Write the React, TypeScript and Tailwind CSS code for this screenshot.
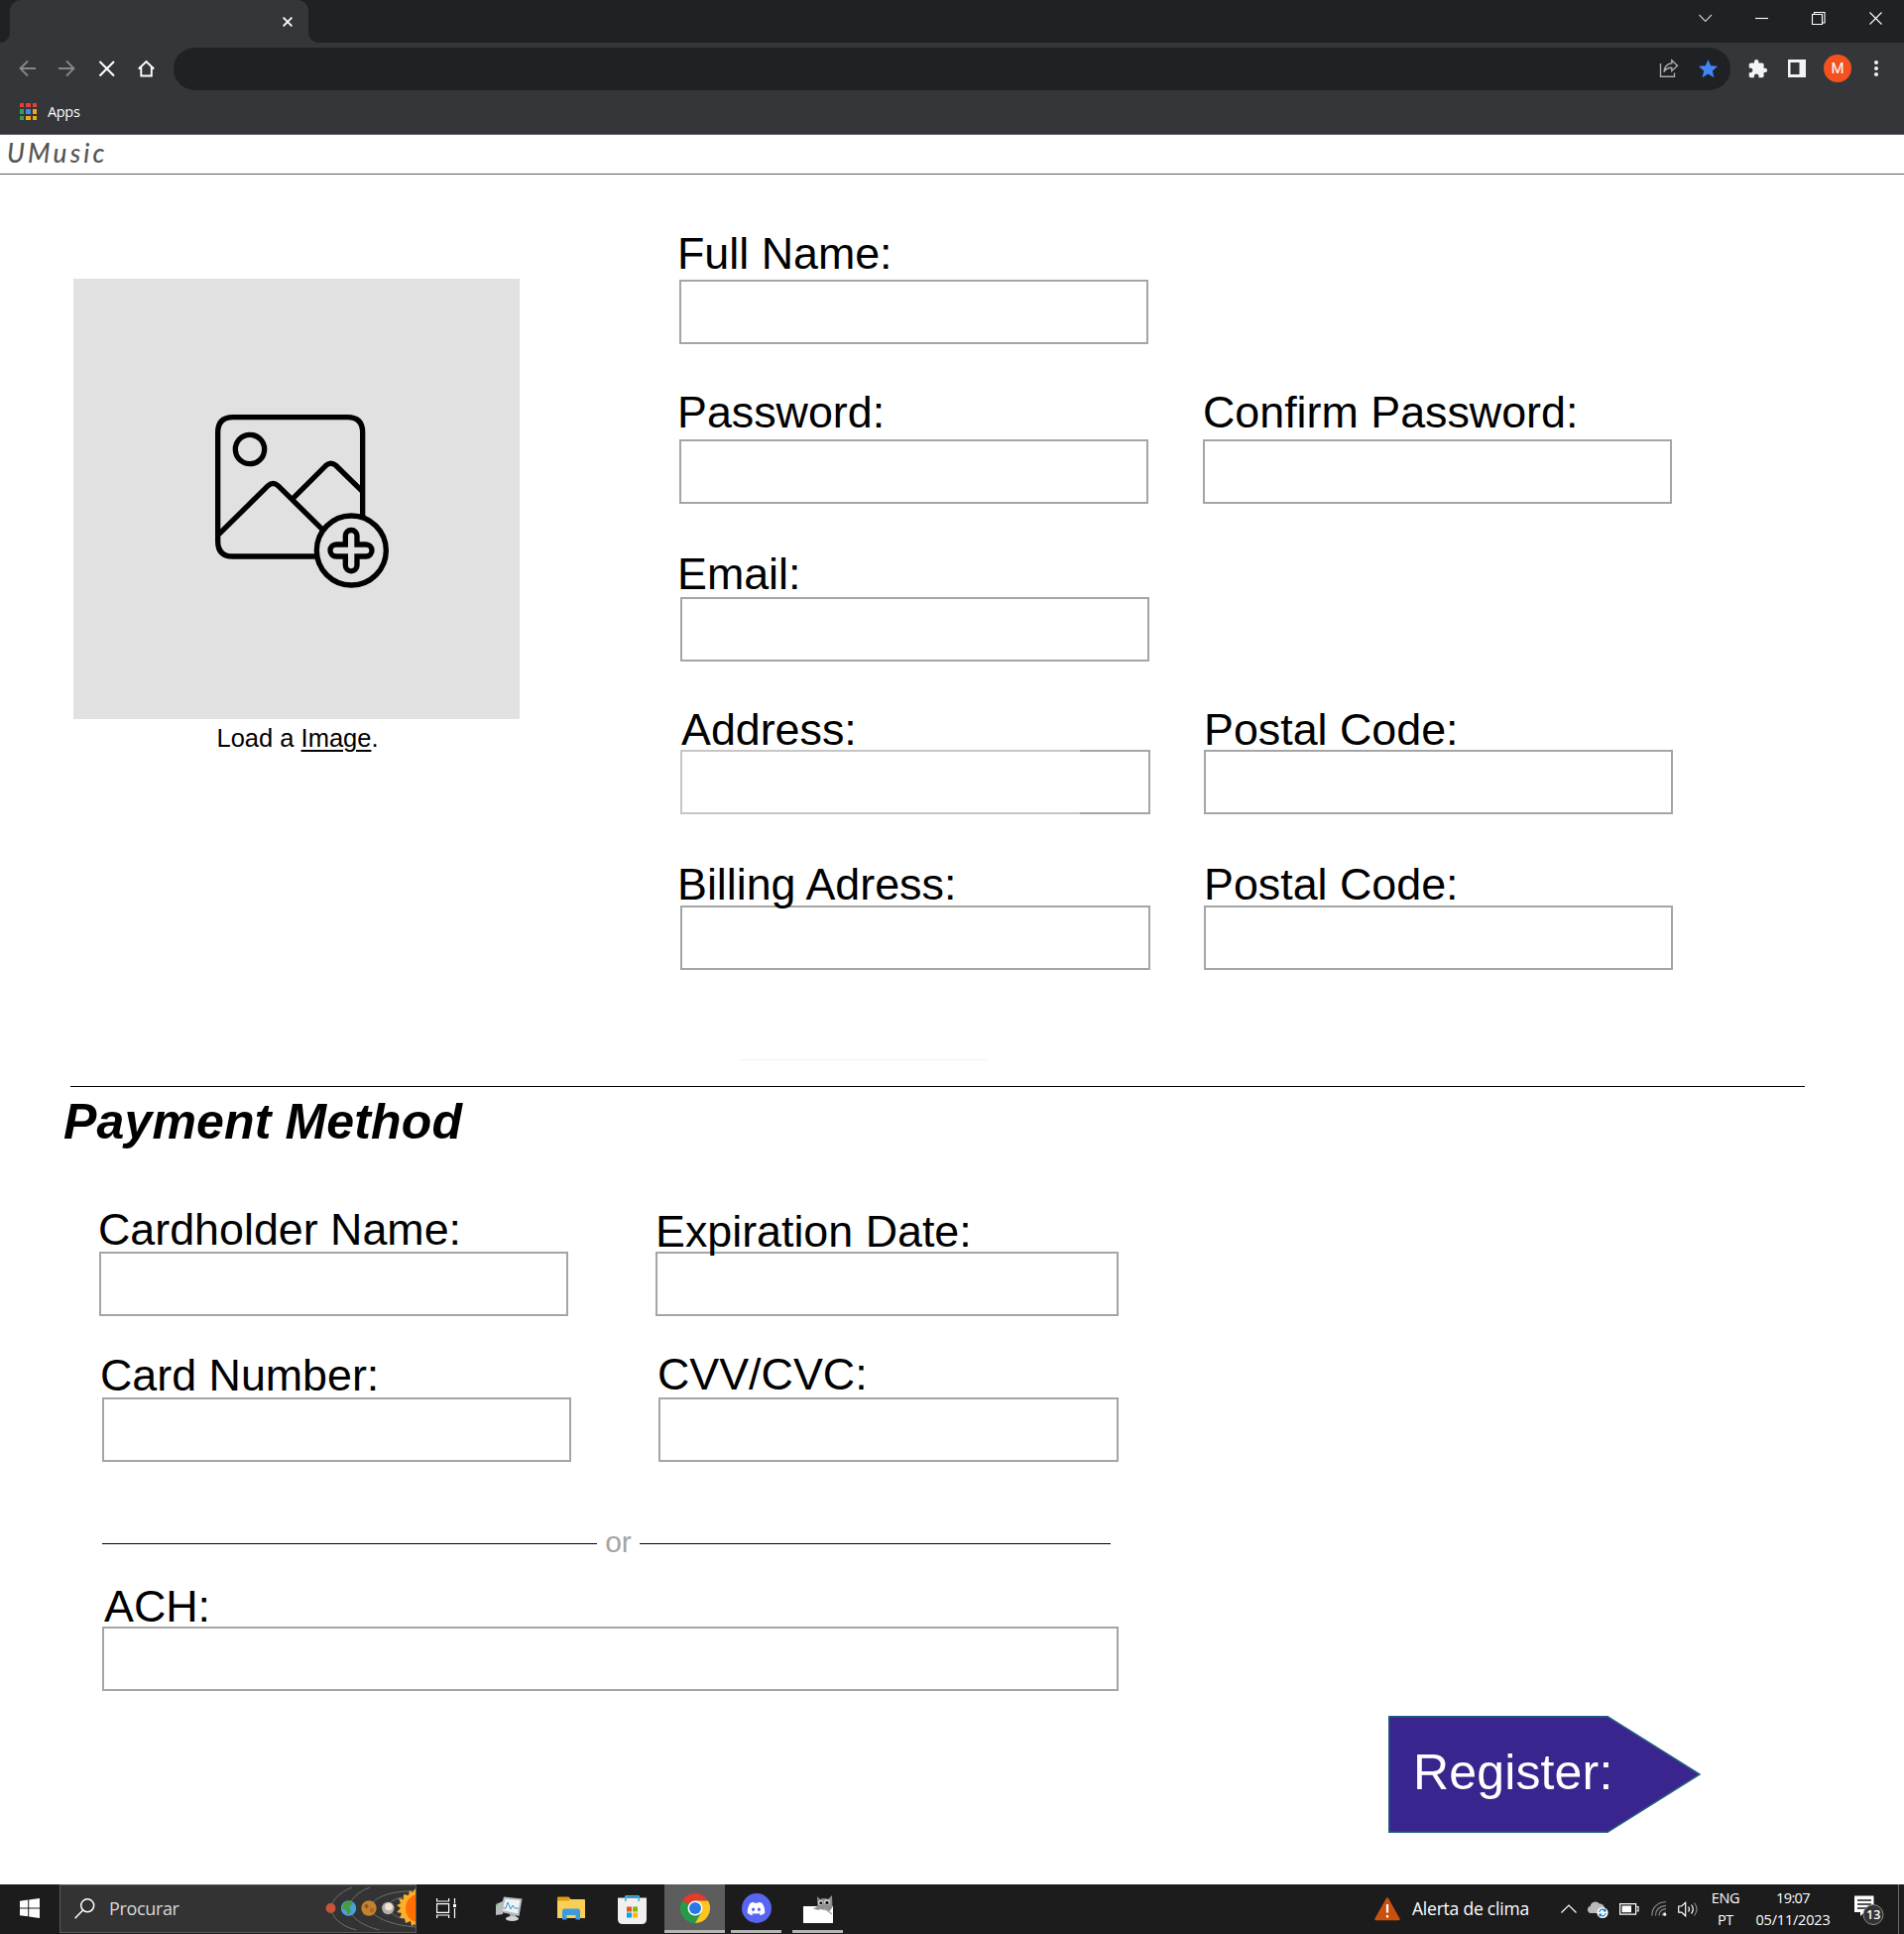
import React from "react";
import { MdExtension, MdStar, MdMoreVert } from "react-icons/md";
import { FaDiscord } from "react-icons/fa";

type FieldProps = { label: string; box: string; labelClass: string; className?: string; children?: React.ReactNode };

function Field({ label, box, labelClass, className = "", children }: FieldProps) {
  return (
    <div className={`flex flex-col ${className}`}>
      <label className={`z-10 h-[38px] whitespace-nowrap text-[44.800px] leading-[45px] ${labelClass}`}>{label}</label>
      <div className={`h-[65px] border-2 border-[#a5a5a5] ${box}`}>{children}</div>
    </div>
  );
}

function TabStrip() {
  return (
    <div className="flex h-[43px] bg-[#202124]">
      <div className="flex h-full w-[10px] items-end bg-[#35363a]">
        <div className="h-full w-full rounded-br-[10px] bg-[#202124]" />
      </div>
      <div className="flex h-full w-[301px] items-center justify-end bg-[#202124]">
        <div className="flex h-full w-full items-center justify-end rounded-t-[11px] bg-[#35363a] pr-[16px]">
          <svg width="10" height="10" viewBox="0 0 10 10" stroke="#fff" strokeWidth="1.8">
            <path d="M.6.6l8.8 8.8M9.4.6L.6 9.4" />
          </svg>
        </div>
      </div>
      <div className="flex h-full flex-1 bg-[#35363a]">
        <div className="flex h-full flex-1 items-start justify-end rounded-bl-[10px] bg-[#202124] pt-[12px] pr-[22px]">
          <svg width="185" height="13" viewBox="0 0 185 13" fill="none" stroke="#fff" strokeWidth="1.1">
            <path d="M.5 3l6.2 6.5L13 3" stroke="#ccc" />
            <path d="M57 6.5h13" />
            <path d="M114.5 2.5h10v10h-10zM116.500 2.500v-2h10.500v10.500h-2.500" />
            <path d="M172.500.5l12 12M184.500.5l-12 12" />
          </svg>
        </div>
      </div>
    </div>
  );
}

function Toolbar() {
  return (
    <div className="flex h-[52px] items-center bg-[#35363a]">
      <svg className="ml-[19px]" width="138" height="18" viewBox="0 0 138 18" fill="none" strokeWidth="1.9">
        <g stroke="#86878a">
          <path d="M17 9H1.500M9 1.500L1.500 9 9 16.500" />
          <path d="M40 9h15.500M48 1.500L55.500 9 48 16.500" />
        </g>
        <g stroke="#fff">
          <path d="M81.500 2l14.500 14.500M96 2L81.500 16.500" strokeWidth="2.100" />
          <path d="M120.800 9.500L128.500 2l7.700 7.500M123.300 8v8.500h10.500V8" />
        </g>
      </svg>
      <div className="ml-[18px] flex h-[43px] w-[1570px] items-center justify-end rounded-full bg-[#202124] pr-[11px]">
        <svg className="mr-[18px]" width="20" height="20" viewBox="0 0 20 20" fill="none" stroke="#a9abae" strokeWidth="1.400">
          <path d="M1.500 5v13.300h14v-3.800" />
          <path d="M12.800 1.800l5.700 5.400-5.700 5.200V9.300C9 9.200 6.500 10.500 5 13.500c.3-4.500 2.800-8 7.800-8.700z" />
        </svg>
        <MdStar className="size-[23px] text-[#4285f4]" />
      </div>
      <MdExtension className="ml-[17px] size-[21px] text-[#f1f3f4]" />
      <svg className="ml-[20px]" width="18" height="18" viewBox="0 0 18 18">
        <path d="M0 0h18v18H0zM2.500 3v12h9V3z" fill="#f1f3f4" fillRule="evenodd" />
      </svg>
      <div className="ml-[18px] flex size-[28px] items-center justify-center rounded-full bg-[#f4511e] font-[Roboto] text-[15px] text-white">M</div>
      <MdMoreVert className="ml-[13px] size-[24px] text-[#f1f3f4]" />
    </div>
  );
}

const dots = ["bg-[#ea3d34]", "bg-[#ea3d34]", "bg-[#ea3d34]", "bg-[#34a04f]", "bg-[#3b8af5]", "bg-[#f5a90b]", "bg-[#34a04f]", "bg-[#f5a90b]", "bg-[#f5a90b]"];

function Bookmarks() {
  return (
    <div className="flex h-[41px] items-center border-b border-[#606165] bg-[#35363a] pb-[5px] pl-[20px]">
      <div className="grid grid-cols-3 gap-[2px]">
        {dots.map((c, i) => (
          <div key={i} className={`size-[4.300px] ${c}`} />
        ))}
      </div>
      <span className="ml-[11px] font-['Open_Sans'] text-[14.500px] leading-[18px] tracking-[-0.300px] text-white">Apps</span>
    </div>
  );
}

function ImageDrop() {
  return (
    <div className="flex h-[444px] w-[450px] bg-[#e1e1e1]">
      <svg width="450" height="444" viewBox="42 33 1350 1332" fill="none" stroke="#000" strokeWidth="16">
        <path d="M778 873H525Q479 873 479 827V498Q479 452 525 452H871Q917 452 917 498V752" />
        <circle cx="576" cy="549" r="44" />
        <path d="M482 806L631 659Q646 646 661 659L794 790M706 698L806 598Q821 585 836 598L916 676" />
        <circle cx="883" cy="855" r="105" />
        <path d="M865 837V811a17 17 0 0 1 35 0V837H927a17 17 0 0 1 0 36H900V900a17 17 0 0 1-35 0V873H837a17 17 0 0 1 0-36z" />
      </svg>
    </div>
  );
}

function RegisterButton() {
  return (
    <button className="relative flex h-[118px] w-[315px] pl-[25px]">
      <svg className="absolute inset-0" width="315" height="118" viewBox="0 0 315 118">
        <path d="M.7.7H221L314 59 221 117.300H.7z" fill="#3a258e" stroke="#23617f" strokeWidth="1.500" />
      </svg>
      <span className="relative pt-[32px] text-[50px] leading-[50px] tracking-[0.150px] text-white">Register:</span>
    </button>
  );
}

function SolarSystem() {
  return (
    <svg width="92" height="48" viewBox="0 0 92 48">
      <g fill="none" stroke="#6a6e74" strokeWidth="1">
        <path d="M28 2C15 7 8 15 6.500 23c2 10 10 18 26 22" />
        <path d="M46 2C35 6 27 13 24.500 22c2 11 15 19 31 23" />
        <path d="M92 6C67 5 49 12 45 23c6 11 25 17 47 19" />
        <path d="M80 12C71 13 65 17 64 22c2 6 9 11 20 12" />
      </g>
      <circle cx="6.500" cy="23" r="5" fill="#c4553a" />
      <circle cx="24.500" cy="23" r="7.700" fill="#4a9fe0" />
      <path d="M19 19q4-5 8-3l2 3-4 2 2 5-3 4-2-5-4-2z" fill="#4a9b3a" />
      <circle cx="45" cy="23" r="7.700" fill="#c4812f" />
      <circle cx="42.500" cy="21" r="2" fill="#8f5718" />
      <circle cx="48" cy="25" r="2.200" fill="#a66a22" />
      <circle cx="64.300" cy="23" r="6.200" fill="#b3aeb0" />
      <circle cx="65" cy="21.500" r="3.800" fill="#f0e4cf" />
      <path d="M92 3l-3 4-3-2-1 5-5-1 0 5-5-1 2 5-4 2 4 3-4 4 5 1-2 5 5 0 1 5 5-2 1 5 3-2 2 4z" fill="#fbae2c" />
      <path d="M92 9Q82 13 82 23t10 14z" fill="#ff6f00" />
    </svg>
  );
}

function Taskbar() {
  return (
    <div className="flex h-[50px] bg-[#1c1c1c] font-['Open_Sans'] text-white">
      <div className="flex w-[60px] items-center justify-center pb-[2px]">
        <svg width="20" height="20" viewBox="0 0 20 20" fill="#fff">
          <path d="M0 2.800L8.200 1.600V9.400H0zM9.200 1.500L20 0V9.400H9.200zM0 10.400H8.200V18.300L0 17.200zM9.200 10.400H20V20L9.200 18.500z" />
        </svg>
      </div>
      <div className="flex h-[49px] w-[360px] items-center justify-between border border-[#595959] bg-[#333333] pl-[14px]">
        <div className="flex items-center">
          <svg width="21" height="21" viewBox="0 0 21 21" fill="none" stroke="#fff" strokeWidth="1.500">
            <circle cx="13.200" cy="7.300" r="6.500" />
            <path d="M8.600 12L.6 20.200" />
          </svg>
          <span className="ml-[14px] text-[18px] tracking-[-0.350px] text-[#d8d8d8]">Procurar</span>
        </div>
        <SolarSystem />
      </div>
      <div className="flex w-[250px] items-center pb-[2px]">
        <svg className="ml-[20px]" width="20" height="20" viewBox="0 0 20 20" fill="none" stroke="#fff" strokeWidth="1.200">
          <path d="M.6 0v3h12V0M.6 20v-3h12v3M.6 5.600h12v8.800H.6zM18.500 0v5.500M18.500 10v10" />
          <path d="M17 6h3v3h-3z" fill="#fff" stroke="none" />
        </svg>
        <svg className="ml-[39px] mt-[2px]" width="28" height="26" viewBox="0 0 28 26">
          <path d="M1 8l7-3v13l-7 1z" fill="#b9bcbc" />
          <circle cx="2" cy="9" r="1" fill="#42d34c" />
          <path d="M15 17h5l2 5h-7z" fill="#a5a7a8" />
          <ellipse cx="17.500" cy="22.500" rx="6.500" ry="2.600" fill="#d3d5d6" />
          <path d="M9 .5L27.500 2.500 24.500 20 5 15.500z" fill="#b7babc" />
          <path d="M10.500 2.500L25.500 4 23 17.500 7.500 14z" fill="#edf3f7" />
          <path d="M8 12l3 0 2-6 3 7 2-4 2 3 4 0" stroke="#4a93bd" fill="none" />
        </svg>
        <svg className="ml-[35px]" width="28" height="24" viewBox="0 0 28 24">
          <path d="M0 2Q0 1 1 1H11l2 2H27q1 0 1 1V22H0z" fill="#f9cf57" />
          <path d="M0 1.500Q0 .5 1 .5H11.500l2 2-2 2H0z" fill="#df9e0b" />
          <path d="M5 23.500V15q0-2.500 2.500-2.500h13Q23 12.500 23 15v8.500H18.500V19H9.500v4.500z" fill="#3b9ae0" />
        </svg>
        <svg className="ml-[33px] mt-[2px]" width="29" height="29" viewBox="0 0 29 29">
          <path d="M0 2.500H29V24q0 5-5 5H5Q0 29 0 24z" fill="#f0f0f0" />
          <path d="M7.800 6V1.500q0-.7.700-.7h12q.7 0 .7.700V6" fill="none" stroke="#38b6f0" strokeWidth="1.700" />
          <path d="M9 11.500h5v5H9z" fill="#f25022" />
          <path d="M15 11.500h5v5h-5z" fill="#7fba00" />
          <path d="M9 17.500h5v5H9z" fill="#00a4ef" />
          <path d="M15 17.500h5v5h-5z" fill="#ffb900" />
        </svg>
      </div>
      <div className="flex h-[49px] w-[61px] flex-col items-center justify-between border-b-[3px] border-[#b5b5b5] bg-[#5d5d5d] pt-[9px]">
        <svg width="30" height="30" viewBox="0 0 30 30">
          <path d="M15 15L2 7.500A15 15 0 0 1 28 7.500H15z" fill="#e33b2e" />
          <path d="M15 15L2 7.500A15 15 0 0 0 15 30l6.500-11.300z" fill="#259b48" />
          <path d="M15 7.500H28A15 15 0 0 1 15 30l6.500-11.300z" fill="#fcc61e" />
          <circle cx="15" cy="15" r="7.500" fill="#fff" />
          <circle cx="15" cy="15" r="6" fill="#2a78e8" />
        </svg>
      </div>
      <div className="ml-[6px] flex h-[49px] w-[51px] flex-col items-center border-b-[3px] border-[#b5b5b5] pt-[9px]">
        <div className="flex size-[30px] items-center justify-center rounded-full bg-[#5865f2]">
          <FaDiscord className="size-[19px]" />
        </div>
      </div>
      <div className="ml-[11px] flex h-[49px] w-[51px] flex-col items-center border-b-[3px] border-[#b5b5b5] pt-[10px]">
        <svg width="30" height="30" viewBox="0 0 30 30">
          <path d="M0 12H30V29H0z" fill="#fff" />
          <path d="M14 2l3 3q4-2 8 0l4-4 .5 12-3 4-9-2q-3 2-8-1 4 0 5-3z" fill="#8f8f8f" />
          <circle cx="17.500" cy="8.500" r="2.500" fill="#ddd" />
          <circle cx="24" cy="8" r="2.800" fill="#ddd" />
          <circle cx="17.800" cy="8.700" r="1.500" fill="#111" />
          <circle cx="24" cy="8.500" r="1.700" fill="#111" />
          <path d="M21 14l8 6" stroke="#aaa" strokeWidth="1.500" />
        </svg>
      </div>
      <div className="flex flex-1 items-center pb-[1px] pl-[536px]">
        <svg width="26" height="24" viewBox="0 0 26 24">
          <path d="M13 1.500L24.500 22H1.500z" fill="#ca5010" stroke="#ca5010" strokeWidth="2.500" strokeLinejoin="round" />
          <path d="M13 7v8.500M13 18v2.500" stroke="#fff" strokeWidth="2.200" />
        </svg>
        <span className="ml-[12px] w-[150px] whitespace-nowrap text-[17.500px] tracking-[-0.220px]">Alerta de clima</span>
        <svg width="140" height="24" viewBox="0 0 140 24" fill="none" stroke="#fff" strokeWidth="1.200">
          <path d="M.5 15.500L8 8l7.500 7.500" />
          <path d="M31 16h-1a3.600 3.600 0 0 1-.5-7A5.500 5.500 0 0 1 39 6.500a4.500 4.500 0 0 1 5 4.500v5z" fill="#b9b9b9" stroke="none" />
          <circle cx="42" cy="15.500" r="5.600" fill="#fff" stroke="none" />
          <path d="M38.800 15a3.300 3.300 0 0 1 6-1.500M45.200 16a3.300 3.300 0 0 1-6 1.500M45 11.500v2.300h-2.300M39 19.500v-2.300h2.300" stroke="#1177d1" />
          <path d="M59.600 6.600h16v10.500h-16zM76.500 9.500h1.500v4.500h-1.500" />
          <path d="M61.500 8.500h9.500v6.700h-9.500z" fill="#fff" stroke="none" />
          <g stroke="#8a8a8a">
            <path d="M92 18.500C91.500 11 97 5 106 4.500M95.500 18.500C95.500 12.500 99 9 106 8.300M99 18.500c0-4 2-6.300 7-6.800M102.500 18.500c0-2 1-3.300 3.500-3.500" />
          </g>
          <circle cx="104.800" cy="17.300" r="1.500" fill="#fff" stroke="none" />
          <path d="M118.700 9h3l4-3.700v13.500l-4-3.700h-3zM128.500 9.500q2 2.500 0 5M131.500 7.500q3.500 4.500 0 9" />
          <path d="M134.500 5.500q5 6.500 0 13" stroke="#888" />
        </svg>
        <div className="ml-[4px] flex w-[44px] flex-col items-center text-[14.500px] leading-[22px] tracking-[-0.300px]">
          <span>ENG</span>
          <span>PT</span>
        </div>
        <div className="ml-[5px] flex w-[82px] flex-col items-center text-[14.500px] leading-[22px] tracking-[-0.200px]">
          <span className="tracking-[-0.600px]">19:07</span>
          <span>05/11/2023</span>
        </div>
        <div className="relative ml-[21px] h-[32px] w-[32px]">
          <svg width="32" height="32" viewBox="0 0 32 32">
            <path d="M0 2.500H19.500V19H10l-4 4V19H0z" fill="#fff" />
            <path d="M3 7h14M3 11h14M3 15h9" stroke="#1c1c1c" strokeWidth="1.400" />
            <circle cx="19" cy="21.500" r="10" fill="#333" stroke="#8a8a8a" strokeWidth="1" />
          </svg>
          <span className="absolute left-[12px] top-[14px] text-[12.500px] font-semibold leading-[16px]">13</span>
        </div>
        <div className="ml-auto mr-[5px] h-[50px] w-px bg-[#6a6a6a]" />
      </div>
    </div>
  );
}

export default function App() {
  return (
    <div className="flex h-[1950px] w-[1920px] flex-col overflow-hidden bg-white font-['Liberation_Sans',Arial,sans-serif] text-black">
      <TabStrip />
      <Toolbar />
      <Bookmarks />
      <header className="flex h-[40px] items-center border-b border-[#5c5c5c] pb-[3px] pl-[7px]">
        <span className="font-['Segoe_Print',Lato,cursive] text-[26px] font-medium italic leading-[32px] tracking-[3.200px] text-[#555]">UMusic</span>
      </header>

      <main className="flex h-[919px] px-[74px]">
        <section className="mt-[105px] flex w-[450px] flex-col items-center">
          <ImageDrop />
          <p className="mt-[5px] pl-[2px] text-[25.500px] leading-[28px]">
            Load a <span className="underline decoration-[1.500px] underline-offset-[3px]">Image</span>.
          </p>
        </section>

        <section className="ml-[161px] mt-[57px] flex w-[475px] flex-col items-start">
          <Field label="Full Name:" box="mt-[11px] w-[473px]" labelClass="-ml-[2px]" />
          <Field className="mt-[46px]" label="Password:" box="mt-[12px] w-[473px]" labelClass="-ml-[2px]" />
          <Field className="mt-[48px]" label="Email:" box="ml-[1px] mt-[8px] w-[473px]" labelClass="-ml-[2px]" />
          <Field className="mt-[46px]" label="Address:" box="ml-[1px] mt-[5px] w-[474px] [border-image:linear-gradient(to_right,#c6c6c6_85%,#a5a5a5_85%)_2]" labelClass="ml-[2px]" />
          <Field className="mt-[48px]" label="Billing Adress:" box="ml-[1px] mt-[6px] w-[474px]" labelClass="-ml-[2px]" />
          <div className="ml-[60px] mt-[90px] h-px w-[250px] bg-[#f3f3f3]" />
        </section>

        <section className="ml-[53px] mt-[217px] flex flex-col items-start">
          <Field label="Confirm Password:" box="mt-[12px] w-[473px]" labelClass="" />
          <Field className="mt-[205px]" label="Postal Code:" box="ml-[1px] mt-[5px] w-[473px]" labelClass="ml-[1px]" />
          <Field className="mt-[48px]" label="Postal Code:" box="ml-[1px] mt-[6px] w-[473px]" labelClass="ml-[1px]" />
        </section>
      </main>

      <section className="flex h-[805px]">
        <div className="w-[1400px]">
          <div className="ml-[71px] h-px w-[1749px] bg-black" />
          <h2 className="ml-[64px] mt-[10px] h-[42px] whitespace-nowrap text-[50px] font-bold italic leading-[50px] tracking-[0.150px]">Payment Method</h2>
          <div className="flex">
            <div className="mt-[69px] flex w-[561px] flex-col items-start pl-[100px]">
              <Field label="Cardholder Name:" box="mt-[7px] w-[473px]" labelClass="-ml-[1px]" />
              <Field className="mt-[37px]" label="Card Number:" box="ml-[3px] mt-[7px] w-[473px]" labelClass="ml-[1px]" />
            </div>
            <div className="ml-[100px] mt-[71px] flex flex-col items-start">
              <Field label="Expiration Date:" box="mt-[5px] w-[467px]" labelClass="" />
              <Field className="mt-[36px]" label="CVV/CVC:" box="ml-[3px] mt-[8px] w-[464px]" labelClass="ml-[2px]" />
            </div>
          </div>
          <div className="ml-[103px] mt-[66px] flex h-[33px] items-center">
            <div className="h-px w-[499px] bg-black" />
            <span className="w-[43px] pb-[4px] text-center text-[30px] leading-[28px] text-[#a5a5a5]">or</span>
            <div className="h-px w-[475px] bg-black" />
          </div>
          <Field className="ml-[103px] mt-[24px]" label="ACH:" box="mt-[5px] w-[1025px]" labelClass="ml-[2px]" />
        </div>
        <div className="mt-[635px]">
          <RegisterButton />
        </div>
      </section>

      <Taskbar />
    </div>
  );
}
